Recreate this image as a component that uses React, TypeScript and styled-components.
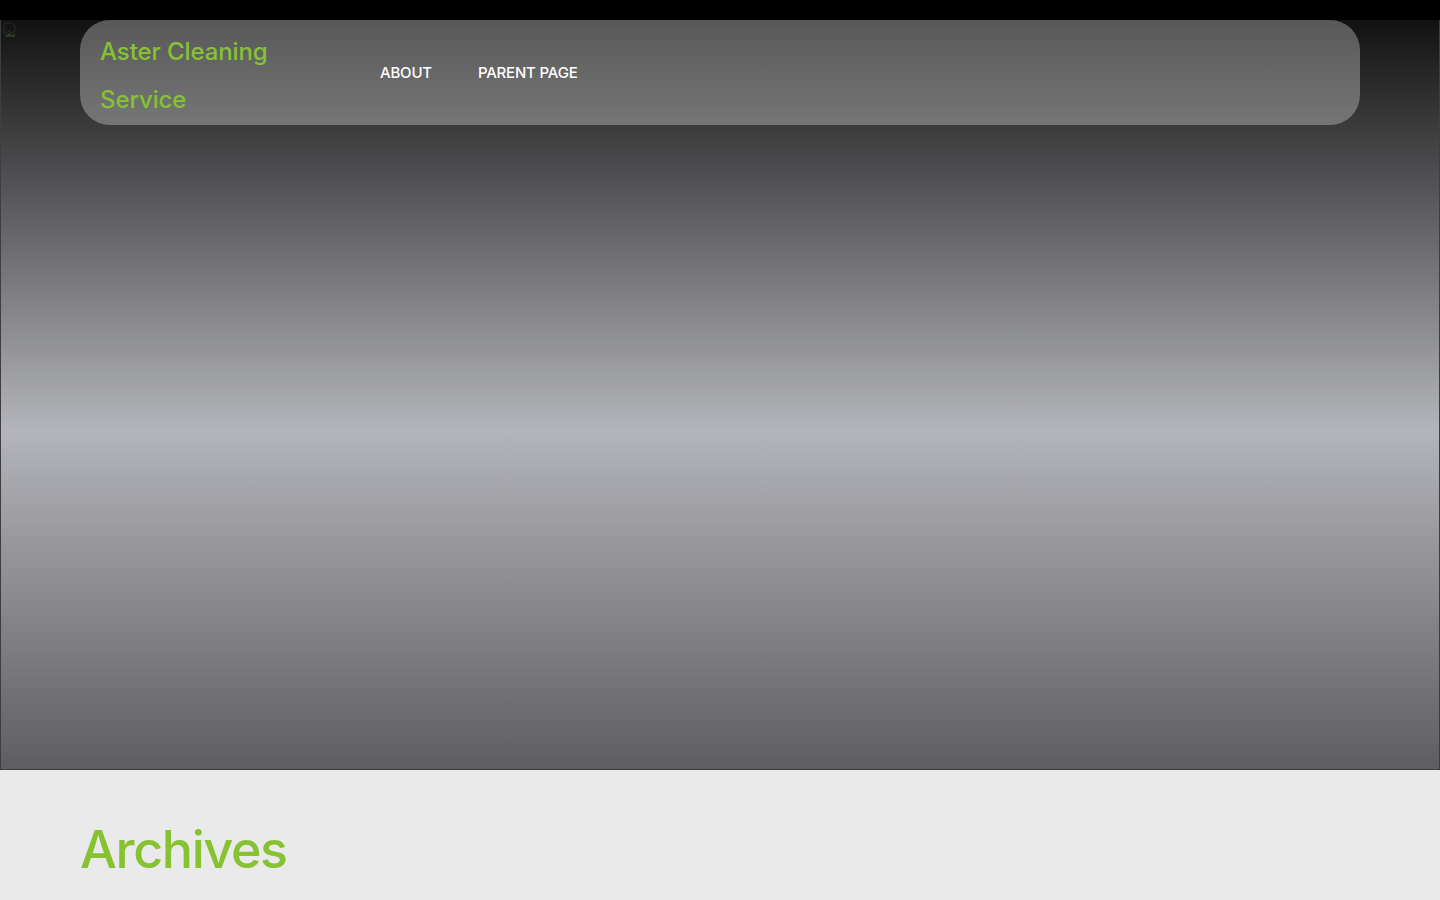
import React from "react";
import styled, { createGlobalStyle } from "styled-components";

const Global = createGlobalStyle`
  html, body { margin: 0; padding: 0; }
  body {
    background: #eaeaea;
    font-family: Inter, "Noto Sans", sans-serif;
    -webkit-font-smoothing: antialiased;
  }
  * { box-sizing: border-box; }
`;

const Page = styled.div`
  display: flex;
  flex-direction: column;
  min-height: 900px;
  overflow: hidden;
`;

const TopBar = styled.div`
  height: 20px;
  background: #000;
`;

const Hero = styled.div`
  position: relative;
  height: 750px;
  border: 1px solid #3e3e40;
  border-top: none;
  background: linear-gradient(180deg, #111111 0%, #b4b5ba 54.7%, #5e5e62 100%);
  padding: 0 79px;
`;

const BrokenImage = styled.svg`
  position: absolute;
  left: 1px;
  top: 2px;
  width: 16px;
  height: 16px;
`;

const Header = styled.header`
  height: 105px;
  border-radius: 30px;
  background: rgba(255, 255, 255, 0.3);
  display: flex;
  align-items: center;
  padding: 0 20px;
`;

const Brand = styled.a`
  width: 240px;
  padding-top: 6px;
  font-size: 24px;
  font-weight: 500;
  line-height: 48px;
  color: #86c232;
  text-decoration: none;
  letter-spacing: -0.1px;
`;

const Nav = styled.nav`
  display: flex;
  gap: 46px;
  margin-left: 40px;
`;

const NavLink = styled.a`
  color: #ffffff;
  font-size: 15px;
  font-weight: 500;
  text-transform: uppercase;
  text-decoration: none;
  letter-spacing: -0.2px;
`;

const Content = styled.main`
  padding: 48px 80px 0;
`;

const Heading = styled.h1`
  margin: 0;
  color: #86c232;
  font-size: 52px;
  font-weight: 500;
  line-height: 64px;
  letter-spacing: -1.4px;
`;

export default function App() {
  return (
    <>
      <Global />
      <Page>
        <TopBar />
        <Hero>
          <BrokenImage viewBox="0 0 16 16">
            <path d="M2 1h8l3 3v5l-3 2-3-2-5 3z" fill="none" stroke="#2a2a2a" strokeWidth="1" />
            <path d="M3 14l4-3 3 2 3-2v4H3z" fill="#2f3a2a" />
          </BrokenImage>
          <Header>
            <Brand href="#">Aster Cleaning Service</Brand>
            <Nav>
              <NavLink href="#">About</NavLink>
              <NavLink href="#">Parent Page</NavLink>
            </Nav>
          </Header>
        </Hero>
        <Content>
          <Heading>Archives</Heading>
        </Content>
      </Page>
    </>
  );
}
